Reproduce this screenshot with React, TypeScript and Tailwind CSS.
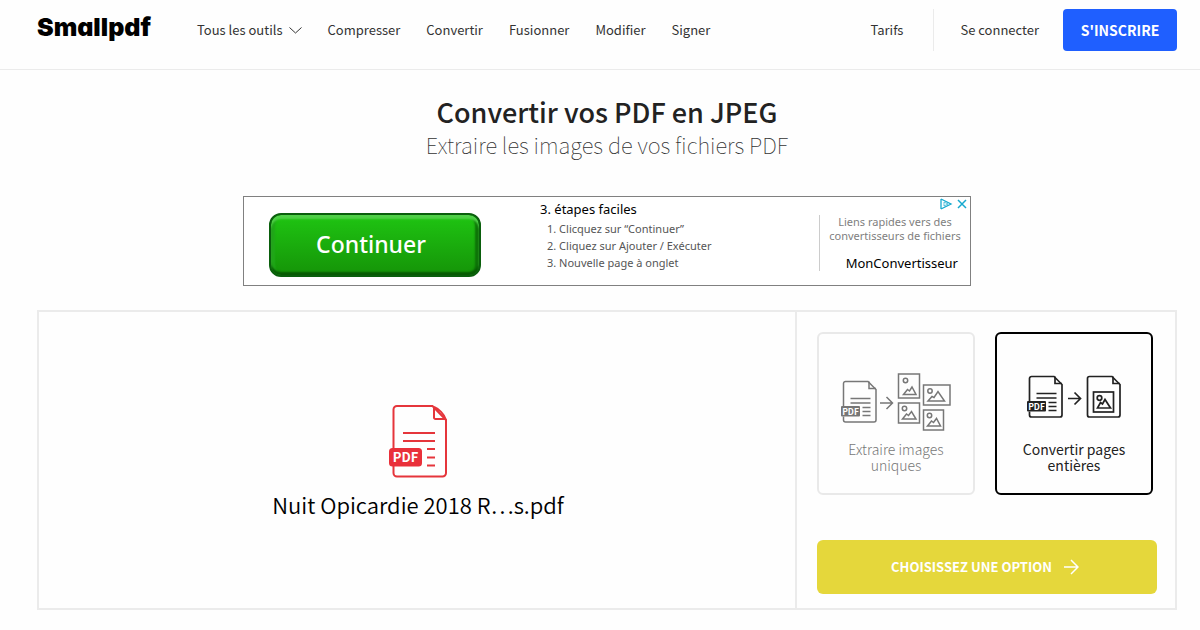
import { useState } from "react";
import type { ReactNode } from "react";

const tools = ["Compresser", "Convertir", "Fusionner", "Modifier", "Signer"];

const steps = ["1. Clicquez sur “Continuer”", "2. Cliquez sur Ajouter / Exécuter", "3. Nouvelle page à onglet"];

function PdfFileIcon() {
  return (
    <svg width="58" height="73" viewBox="0 0 58 73" fill="none" stroke="#e5353b" strokeWidth="2" aria-hidden="true">
      <path d="M4.500 44V4.500a3.500 3.500 0 0 1 3.500-3.500H43.500L57 15V68a3.500 3.500 0 0 1-3.500 3.500H8a3.500 3.500 0 0 1-3.500-3.500V60" />
      <path d="M45 2v10.500a1.500 1.500 0 0 0 1.500 1.500H56.500C55 9 50 4 45 2" />
      <path d="M14 28h32M14 36h32M38 44h8M38 52.500h8M38 60.500h8" strokeWidth="2.200" />
      <rect x="0" y="43" width="33" height="18.500" rx="3.500" fill="#e9303a" stroke="none" />
      <text x="16.500" y="57" fill="#fff" stroke="none" textAnchor="middle" fontSize="13" fontWeight="700" fontFamily="Noto Sans CJK SC, sans-serif">
        PDF
      </text>
    </svg>
  );
}

function SmallPdf() {
  return (
    <>
      <path d="M2.500 26V3.500a2 2 0 0 1 2-2H27l8 8V40a2 2 0 0 1-2 2H4.500a2 2 0 0 1-2-2v-3.500" />
      <path d="M28 1.500v7h7" />
      <path d="M9.500 18.500h20M9.500 23h20M21.500 27.500h8M21.500 31.500h8M21.500 35.500h8" />
      <rect x="0" y="26" width="19" height="10.500" rx="1" fill="currentColor" stroke="none" />
      <text x="9.500" y="34.500" fill="#fff" stroke="none" textAnchor="middle" fontSize="8.500" fontWeight="700" fontFamily="Noto Sans CJK SC, sans-serif">
        PDF
      </text>
    </>
  );
}

function ExtractIcon() {
  return (
    <svg width="110" height="58" viewBox="0 0 110 58" fill="none" stroke="currentColor" strokeWidth="1.500" aria-hidden="true">
      <g transform="translate(0 7)">
        <SmallPdf />
      </g>
      <path d="M39 30h12M45.500 24l6 6-6 6" />
      <rect x="57.500" y="1" width="21" height="24" />
      <circle cx="64.500" cy="7.500" r="2.200" />
      <path d="M62.500 21.500l4-5 2 1.500 2.500-4 4 7.500z" />
      <rect x="82.500" y="12" width="26.500" height="20" />
      <circle cx="89" cy="18" r="2.200" />
      <path d="M87 28l4-4.500 2 1 4-6 6.500 9.500z" />
      <rect x="57.500" y="30" width="21" height="20" />
      <circle cx="63.500" cy="35.500" r="2.200" />
      <path d="M61.500 46l4-5 2 1.500 3-4 4.500 7.500z" />
      <rect x="82.500" y="37" width="20" height="20" />
      <circle cx="88.500" cy="42.500" r="2.200" />
      <path d="M86.500 53l4-5 2 1.500 3-4 4 7.500z" />
    </svg>
  );
}

function PagesIcon() {
  return (
    <svg width="96" height="58" viewBox="0 0 96 58" fill="none" stroke="currentColor" strokeWidth="1.700" aria-hidden="true">
      <g transform="translate(1 2)">
        <SmallPdf />
      </g>
      <path d="M42 25.500h12M48.500 19.500l6 6-6 6" />
      <path d="M61.500 5.500a2 2 0 0 1 2-2H86l8 8V42a2 2 0 0 1-2 2H63.500a2 2 0 0 1-2-2z" />
      <path d="M87 3.500v7h7" />
      <rect x="67.500" y="19" width="20" height="20" />
      <circle cx="73.500" cy="25" r="2.300" />
      <path d="M71.500 35l3-5.500 2 1.500 2.500-4.500 5.500 8.500z" />
    </svg>
  );
}

type OptionProps = {
  label: string;
  icon: ReactNode;
  selected: boolean;
  onClick: () => void;
};

function Option({ label, icon, selected, onClick }: OptionProps) {
  return (
    <button
      type="button"
      aria-pressed={selected}
      onClick={onClick}
      className={`flex h-[163px] flex-1 flex-col items-center rounded-md border-2 px-4 pt-[39px] text-[14px] leading-4 ${selected ? "border-black text-[#222222]" : "border-[#e9e9e9] font-light text-[#777777]"}`}
    >
      {icon}
      <span className="mt-2.5">{label}</span>
    </button>
  );
}

function Header() {
  return (
    <header className="border-b border-[#ebebeb]">
      <nav className="flex h-[69px] items-start pt-[9px] pr-[23px] pl-[37px] text-[13px] text-[#333333]">
        <a href="#" className="flex h-[38px] w-[160px] items-center font-['Inter'] text-[25px] font-black text-black [font-feature-settings:'cv11']">
          Smallpdf
        </a>
        <div className="flex h-[42px] flex-1 items-center gap-[26px]">
          <a href="#" className="flex items-center gap-1.5">
            Tous les outils
            <svg width="13" height="7" viewBox="0 0 13 7" fill="none" stroke="currentColor" aria-hidden="true">
              <path d="M0.500 0.500l6 5.500 6-5.500" />
            </svg>
          </a>
          {tools.map((tool) => (
            <a key={tool} href="#">
              {tool}
            </a>
          ))}
        </div>
        <div className="flex h-[42px] items-center">
          <a href="#">Tarifs</a>
          <span className="mr-[26px] ml-[30px] h-[42px] border-l border-[#ebebeb]" />
          <a href="#">Se connecter</a>
          <button type="button" className="ml-6 h-[42px] w-[114px] rounded bg-[#1f5fff] text-[14px] font-bold text-white">
            S'INSCRIRE
          </button>
        </div>
      </nav>
    </header>
  );
}

function Banner() {
  return (
    <aside className="relative mx-auto mt-9 flex h-[90px] w-full max-w-[728px] border border-[#808080] bg-white pl-[25px] font-['Noto_Sans'] text-[11px] text-[#555555]">
      <button
        type="button"
        className="mt-4 h-16 w-[212px] rounded-xl border-2 border-[#0a5f0c] bg-gradient-to-b from-[#1fc512] to-[#159408] pr-2 pb-0.5 text-[23px] font-medium text-white shadow-[inset_0_4px_2px_#4fd047,inset_0_-3px_2px_#075a03,inset_4px_0_2px_#20a719,inset_-4px_0_2px_#0d7208]"
      >
        Continuer
      </button>
      <div className="ml-[59px] flex-1 pt-[3px]">
        <p className="text-[13px] leading-[18px] text-black">3. étapes faciles</p>
        <ol className="mt-0.5 pl-[7px] leading-[17px]">
          {steps.map((step) => (
            <li key={step}>{step}</li>
          ))}
        </ol>
      </div>
      <div className="mt-[18px] mb-[14px] w-[151px] border-l border-[#cccccc] text-center">
        <p className="leading-[14px] text-[#808080]">
          Liens rapides vers des
          <br />
          convertisseurs de fichiers
        </p>
        <p className="mt-2.5 pr-3 text-right text-[13px] leading-5 text-black">MonConvertisseur</p>
      </div>
      <svg className="absolute top-px right-0.5" width="28" height="12" viewBox="0 0 28 12" fill="none" stroke="#16a9cf" strokeWidth="1.300" aria-hidden="true">
        <path d="M1 1v10M1 1l10 5-10 5" />
        <path d="M4 4v4l4-2z" strokeWidth="0.700" />
        <path d="M18 2l8 8M26 2l-8 8" strokeWidth="1.500" />
      </svg>
    </aside>
  );
}

export default function App() {
  const [mode, setMode] = useState("pages");

  return (
    <div className="min-h-screen bg-[#fefefe] font-['Noto_Sans_CJK_SC',sans-serif]">
      <Header />
      <main className="pr-[23px] pb-5 pl-[37px]">
        <h1 className="pt-[26px] text-center text-[27px] leading-8 font-medium text-[#222222]">Convertir vos PDF en JPEG</h1>
        <p className="text-center text-[22px] leading-8 font-thin text-[#333333]">Extraire les images de vos fichiers PDF</p>
        <Banner />
        <section className="mt-6 flex h-[300px] border-2 border-[#ebebeb]">
          <div className="flex flex-1 flex-col items-center pt-[93px] pl-0.5">
            <PdfFileIcon />
            <p className="mt-2.5 text-[22px] leading-8 font-[350] text-black">Nuit Opicardie 2018 R…s.pdf</p>
          </div>
          <div className="w-[380px] border-l-2 border-[#ebebeb] pt-5 pr-[18px] pl-5">
            <div className="flex gap-5 pr-1">
              <Option label="Extraire images uniques" icon={<ExtractIcon />} selected={mode === "images"} onClick={() => setMode("images")} />
              <Option label="Convertir pages entières" icon={<PagesIcon />} selected={mode === "pages"} onClick={() => setMode("pages")} />
            </div>
            <button type="button" className="mt-[45px] flex h-[54px] w-full items-center justify-center gap-3 rounded-md bg-[#e5d73b] pr-1 text-[13px] font-bold text-white">
              CHOISISSEZ UNE OPTION
              <svg width="15" height="16" viewBox="0 0 15 16" fill="none" stroke="currentColor" strokeWidth="1.500" aria-hidden="true">
                <path d="M0 8h14M7 1l7 7-7 7" />
              </svg>
            </button>
          </div>
        </section>
      </main>
    </div>
  );
}
